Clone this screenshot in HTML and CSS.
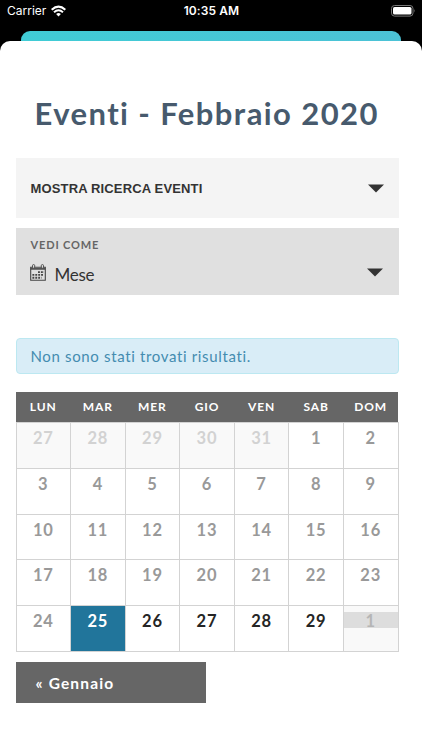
FILE: index.html
```html
<!DOCTYPE html>
<html lang="it">
<head>
    <meta charset="UTF-8">
    <title>Eventi - Febbraio 2020</title>
    <link rel="stylesheet" href="styles.css">
</head>
<body>
<div class="status">
    <div class="carrier">
        <span>Carrier</span>
        <svg width="15" height="12" viewBox="0 0 15 11">
            <path d="M0.7 4.2 Q7.5 -1.9 14.3 4.2" fill="none" stroke="#fff" stroke-width="2.1"/>
            <path d="M3 6.7 Q7.5 2.8 12 6.7" fill="none" stroke="#fff" stroke-width="2"/>
            <path d="M5.1 8.5 Q7.5 6.4 9.9 8.5 L7.5 10.9 Z" fill="#fff"/>
        </svg>
    </div>
    <div class="time">10:35 AM</div>
    <div class="battery">
        <svg width="25" height="12" viewBox="0 0 25 12">
            <rect x="0.5" y="0.5" width="21.5" height="10.6" rx="3" fill="none" stroke="#777"/>
            <rect x="2" y="2" width="18.5" height="7.6" rx="1.6" fill="#fff"/>
            <path d="M23.2 4 Q24.6 5.8 23.2 7.6 Z" fill="#777"/>
        </svg>
    </div>
</div>
<div class="behind"></div>
<div class="sheet">
    <h1>Eventi - Febbraio 2020</h1>
    <div class="search">
        <span>MOSTRA RICERCA EVENTI</span>
        <svg class="arrow" width="16" height="9" viewBox="0 0 16 9"><path d="M0 0.4 H16 L8 8.6 Z" fill="#333"/></svg>
    </div>
    <div class="views">
        <div class="label">VEDI COME</div>
        <div class="view">
            <svg width="16" height="18" viewBox="0 0 16 18">
                <path d="M0.7 3.2 H15.3 V16.3 H0.7 Z" fill="none" stroke="#444" stroke-width="1.1"/>
                <path d="M0.7 4.9 H15.3" stroke="#444" stroke-width="1.6"/>
                <rect x="2.5" y="0.6" width="2.2" height="3.6" rx="1" fill="#e0e0e0" stroke="#444" stroke-width="0.9"/>
                <rect x="11.3" y="0.6" width="2.2" height="3.6" rx="1" fill="#e0e0e0" stroke="#444" stroke-width="0.9"/>
                <path d="M8 8.1 H14 M2.4 10.9 H14 M2.4 13.7 H11.5" stroke="#444" stroke-width="1.9" stroke-dasharray="1.9 1"/>
            </svg>
            <span>Mese</span>
            <svg class="arrow" width="16" height="9" viewBox="0 0 16 9"><path d="M0 0.4 H16 L8 8.6 Z" fill="#333"/></svg>
        </div>
    </div>
    <div class="notice">Non sono stati trovati risultati.</div>
    <table class="calendar">
        <thead>
        <tr><th>LUN</th><th>MAR</th><th>MER</th><th>GIO</th><th>VEN</th><th>SAB</th><th>DOM</th></tr>
        </thead>
        <tbody>
        <tr><td class="other">27</td><td class="other">28</td><td class="other">29</td><td class="other">30</td><td class="other">31</td><td>1</td><td>2</td></tr>
        <tr><td>3</td><td>4</td><td>5</td><td>6</td><td>7</td><td>8</td><td>9</td></tr>
        <tr><td>10</td><td>11</td><td>12</td><td>13</td><td>14</td><td>15</td><td>16</td></tr>
        <tr><td>17</td><td>18</td><td>19</td><td>20</td><td>21</td><td>22</td><td>23</td></tr>
        <tr><td>24</td><td class="today">25</td><td class="future">26</td><td class="future">27</td><td class="future">28</td><td class="future">29</td><td class="next"><div>1</div></td></tr>
        </tbody>
    </table>
    <div class="prev">« Gennaio</div>
</div>
</body>
</html>
```
FILE: styles.css
```css
*{
    margin: 0;
    padding: 0;
    box-sizing: border-box;
}
body{
    height: 750px;
    overflow: hidden;
    background: #000;
    font-family: Lato, "Liberation Sans", sans-serif;
}
svg{
    display: block;
}
/* status bar */
.status{
    display: grid;
    grid-template-columns: 1fr 1fr 1fr;
    align-items: center;
    height: 31px;
    padding: 0 6px 10px 7px;
    color: #fff;
    font-family: Inter, sans-serif;
    font-size: 12px;
}
.carrier{
    display: flex;
    align-items: center;
    gap: 5px;
}
.time{
    font-weight: 600;
    letter-spacing: 0.1px;
    text-align: center;
    white-space: nowrap;
}
.battery{
    display: flex;
    justify-content: flex-end;
}
.behind{
    height: 10px;
    margin: 0 21px;
    border-radius: 9px 9px 0 0;
    background: linear-gradient(90deg, #40ccd5, #4cc2d6);
}
.sheet{
    height: 709px;
    padding: 51px 23.5px 0 15.5px;
    border-radius: 10px 10px 0 0;
    background: #fff;
}
h1{
    height: 66px;
    padding-left: 19px;
    line-height: 42px;
    font-size: 31px;
    font-weight: 700;
    letter-spacing: 1.42px;
    color: #475a6d;
    white-space: nowrap;
}
.search{
    display: flex;
    align-items: center;
    justify-content: space-between;
    height: 59.5px;
    padding: 1px 15px 0;
    background: #f4f4f4;
    color: #333;
    font: bold 13px "Liberation Sans", sans-serif;
    letter-spacing: 0.15px;
}
.views{
    height: 67px;
    margin-top: 10px;
    padding: 9px 15.5px 0 15px;
    background: #e0e0e0;
}
.label{
    line-height: 15px;
    font-size: 11px;
    font-weight: 700;
    letter-spacing: 0.85px;
    color: #666;
}
.view{
    display: flex;
    align-items: center;
    height: 26px;
    margin-top: 9px;
    margin-left: -1px;
    font-size: 17px;
    letter-spacing: -0.3px;
    color: #333;
}
.view svg:first-child{
    margin-top: -2px;
}
.view span{
    margin: 2px 0 0 9px;
}
.view .arrow{
    margin: -3px 0 0 auto;
}
.notice{
    height: 36px;
    margin-top: 43px;
    padding-left: 14px;
    border: 1px solid #bce8f1;
    border-radius: 4px;
    background: #d9edf7;
    line-height: 35px;
    font-size: 15px;
    letter-spacing: 0.65px;
    color: #448cb0;
}
/* calendar */
.calendar{
    width: 383px;
    margin-top: 18px;
    border-collapse: collapse;
    table-layout: fixed;
}
.calendar th{
    height: 31px;
    background: #666;
    font-size: 12px;
    font-weight: 700;
    letter-spacing: 0.9px;
    color: #fff;
}
.calendar td{
    height: 45.8px;
    padding-top: 6px;
    border: 1px solid #d3d3d3;
    vertical-align: top;
    text-align: center;
    line-height: 18px;
    font-size: 16.5px;
    font-weight: 700;
    letter-spacing: 0.8px;
    color: #999;
}
.calendar .other{
    background: #f9f9f9;
    color: #d2d2d2;
}
.calendar .today{
    background: #21759b;
    color: #fff;
}
.calendar .future{
    color: #252525;
}
.calendar .next{
    background: #f9f9f9;
    color: #b5b5b5;
}
.next div{
    height: 16px;
    line-height: 18px;
    background: #ddd;
}
.prev{
    width: 190px;
    height: 41px;
    margin-top: 10px;
    padding-left: 20px;
    background: #666;
    line-height: 42px;
    font-size: 15.5px;
    font-weight: 700;
    letter-spacing: 1.15px;
    color: #fff;
}
```
